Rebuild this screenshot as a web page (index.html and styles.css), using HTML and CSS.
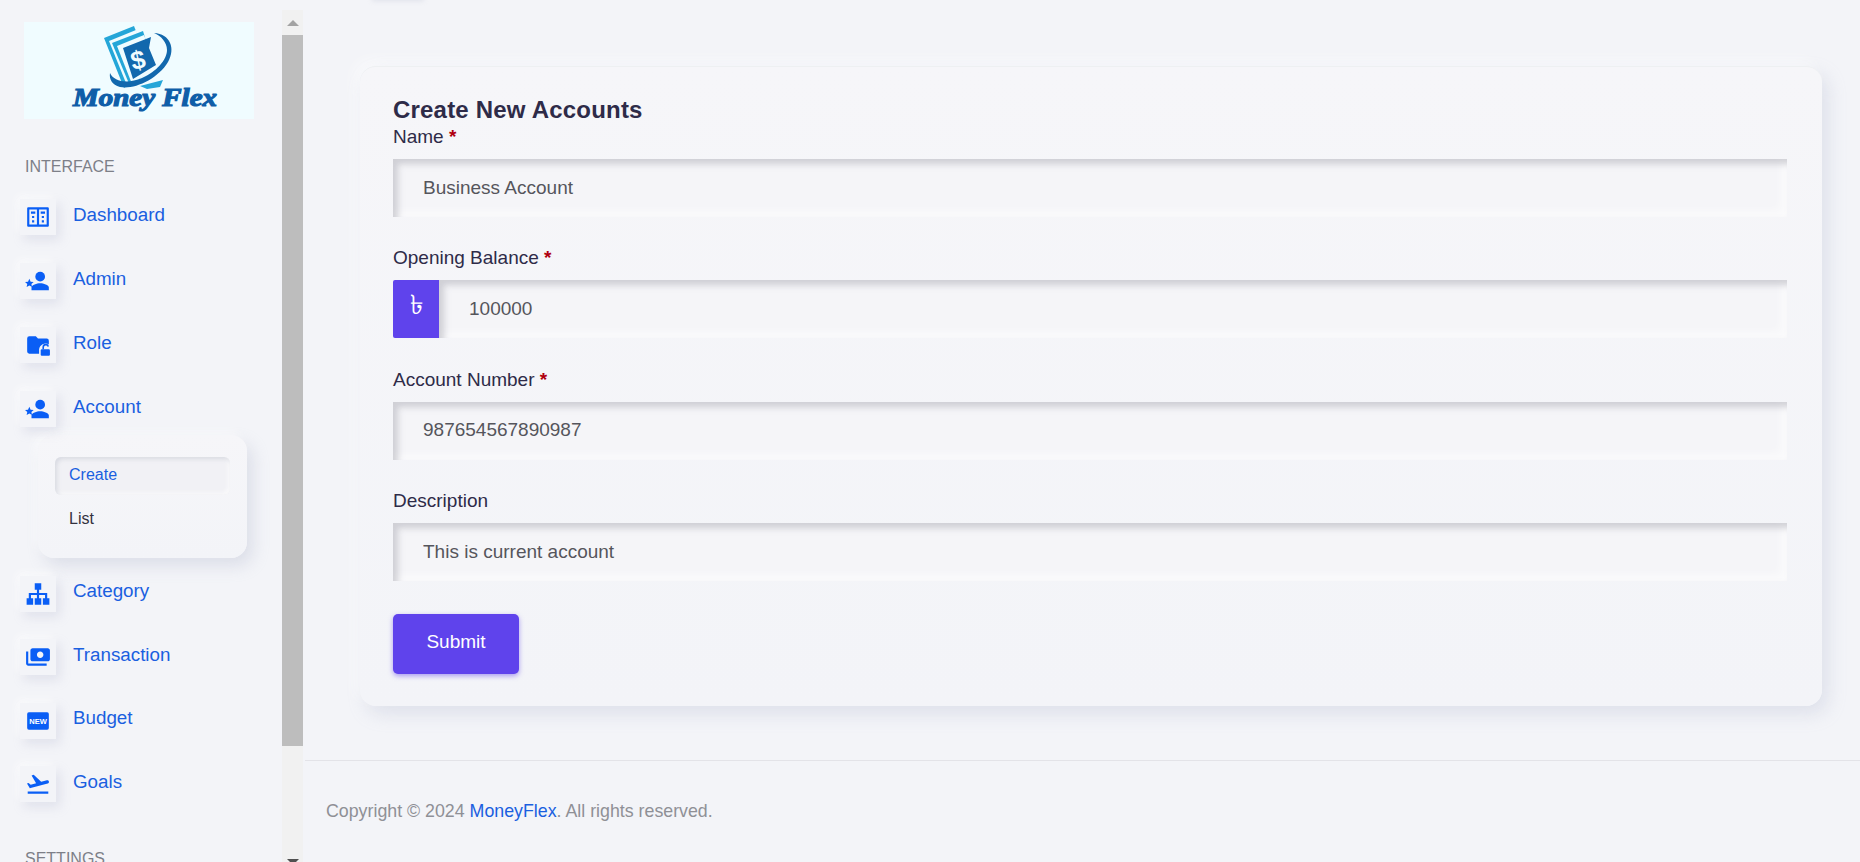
FILE: index.html
```html
<!DOCTYPE html>
<html lang="en">
<head>
    <meta charset="UTF-8">
    <meta name="viewport" content="width=device-width, initial-scale=1.0">
    <title>Create New Accounts - MoneyFlex</title>
    <link rel="stylesheet" href="styles.css">
</head>
<body>
    <aside class="sidebar">
        <div class="sidebar-scroll">
            <a class="logo" href="#">
                <svg viewBox="0 0 230 96" width="230" height="96">
                    <path d="M80 16 L110 4 L126 45 L100 66 Z" fill="#25a6d8"/>
                    <path d="M85 19 L112 8 L128 45 L104 66 Z" fill="#f0fcff"/>
                    <path d="M88 21 L119 9 L130 45 L106 64 Z" fill="#25a6d8"/>
                    <path d="M93 24 L120 13 L132 45 L108 62 Z" fill="#f0fcff"/>
                    <path d="M99 26 L127 15 L125 26 L132 43 L109 57 Z" fill="#1268ad"/>
                    <text class="logo-dollar" x="114" y="47" transform="rotate(-12 114 38)">$</text>
                    <path d="M130 11 C146 12 152 26 144 40 C134 57 110 68 96 65 C88 63 85 57 86 51 C90 60 104 62 118 56 C132 50 143 38 143 28 C143 20 137 14 130 11 Z" fill="#1268ad"/>
                    <path d="M116 64 L139 58 L136 65 L123 67 Z" fill="#25a6d8"/>
                    <text class="logo-text" x="49" y="84" textLength="144" lengthAdjust="spacingAndGlyphs">Money Flex</text>
                </svg>
            </a>

            <div class="menu-title">INTERFACE</div>
            <ul class="menu menu-top">
                <li class="menu-item">
                    <span class="menu-icon">
                        <svg viewBox="0 0 24 24"><path d="M3 3h18a1 1 0 0 1 1 1v16a1 1 0 0 1-1 1H3a1 1 0 0 1-1-1V4a1 1 0 0 1 1-1zM4 5v14h7V5zm9 0v14h7V5z" fill-rule="evenodd"/><path d="M5.500 7h4v2h-4zM14.500 7h4v2h-4zM6.500 11h2v2h-2zM15.500 11h2v2h-2zM6.500 15h2v2h-2zM15.500 15h2v2h-2z"/></svg>
                    </span>
                    <a href="#">Dashboard</a>
                </li>
                <li class="menu-item">
                    <span class="menu-icon">
                        <svg viewBox="0 0 24 24"><circle cx="14" cy="8" r="4.500"/><path d="M14 14c-3 0-8 1.500-8 4v2.500h16V18c0-2.500-5-4-8-4z"/><path d="M4 10l1.200 2.600 2.800.3-2.100 1.900.6 2.800-2.500-1.400-2.500 1.400.6-2.800L.0 12.900l2.800-.3z"/></svg>
                    </span>
                    <a href="#">Admin</a>
                </li>
                <li class="menu-item">
                    <span class="menu-icon">
                        <svg viewBox="0 0 24 24"><path d="M2 6a2 2 0 0 1 2-2h6l2 2h8a2 2 0 0 1 2 2v3.500a6 6 0 0 0-9 4.500v4H4a2 2 0 0 1-2-2z"/><rect x="14.500" y="16" width="8.500" height="6" rx="1"/><path class="lock-arc" d="M16.800 16v-2a2.400 2.400 0 0 1 4.700-.6"/></svg>
                    </span>
                    <a href="#">Role</a>
                </li>
                <li class="menu-item">
                    <span class="menu-icon">
                        <svg viewBox="0 0 24 24"><circle cx="14" cy="8" r="4.500"/><path d="M14 14c-3 0-8 1.500-8 4v2.500h16V18c0-2.500-5-4-8-4z"/><path d="M4 10l1.200 2.600 2.800.3-2.100 1.900.6 2.800-2.500-1.400-2.500 1.400.6-2.800L.0 12.900l2.800-.3z"/></svg>
                    </span>
                    <a href="#">Account</a>
                </li>
            </ul>

            <ul class="submenu">
                <li class="submenu-item active"><a href="#">Create</a></li>
                <li class="submenu-item"><a href="#">List</a></li>
            </ul>

            <ul class="menu menu-bottom">
                <li class="menu-item">
                    <span class="menu-icon">
                        <svg viewBox="0 0 24 24"><path d="M9 2h6v6H9zM1.500 16h6v6h-6zM9 16h6v6H9zM16.500 16h6v6h-6zM11 8h2v3h7.500v5h-2v-3H13v3h-2v-3H5.500v3h-2v-5H11z"/></svg>
                    </span>
                    <a href="#">Category</a>
                </li>
                <li class="menu-item">
                    <span class="menu-icon">
                        <svg viewBox="0 0 24 24"><g transform="matrix(-1 0 0 1 24 0)"><path d="M19 14V6c0-1.100-.9-2-2-2H3c-1.100 0-2 .9-2 2v8c0 1.100.9 2 2 2h14c1.100 0 2-.9 2-2zm-9-1c-1.660 0-3-1.340-3-3s1.340-3 3-3 3 1.340 3 3-1.340 3-3 3zm13-6v11c0 1.100-.9 2-2 2H4v-2h17V7h2z"/></g></svg>
                    </span>
                    <a href="#">Transaction</a>
                </li>
                <li class="menu-item">
                    <span class="menu-icon">
                        <svg viewBox="0 0 24 24"><rect x="2" y="4" width="20" height="16" rx="1.500"/><text class="icon-new" x="12" y="14.500">NEW</text></svg>
                    </span>
                    <a href="#">Budget</a>
                </li>
                <li class="menu-item">
                    <span class="menu-icon">
                        <svg viewBox="0 0 24 24"><path d="M2.500 19h19v2h-19zm19.570-9.360c-.21-.8-1.040-1.280-1.840-1.060L14.920 10l-6.900-6.430-1.930.51 4.140 7.170-4.970 1.330-1.970-1.540-1.450.39 1.820 3.160.77 1.330 1.600-.43 5.310-1.420 4.350-1.160L21 11.490c.81-.23 1.280-1.050 1.070-1.850z"/></svg>
                    </span>
                    <a href="#">Goals</a>
                </li>
            </ul>

            <div class="menu-title settings">SETTINGS</div>
        </div>

        <div class="scrollbar">
            <span class="arrow-up"></span>
            <div class="scroll-track"><div class="scroll-thumb"></div></div>
            <span class="arrow-down"></span>
        </div>
    </aside>

    <div class="main">
        <div class="top-stub"></div>
        <div class="content">
            <form class="card">
                <h1>Create New Accounts</h1>

                <div class="field">
                    <label>Name <span class="req">*</span></label>
                    <input class="input" type="text" value="Business Account">
                </div>

                <div class="field">
                    <label>Opening Balance <span class="req">*</span></label>
                    <div class="input-group">
                        <span class="input-addon">৳</span>
                        <input class="input" type="text" value="100000">
                    </div>
                </div>

                <div class="field">
                    <label>Account Number <span class="req">*</span></label>
                    <input class="input" type="text" value="987654567890987">
                </div>

                <div class="field">
                    <label>Description</label>
                    <input class="input" type="text" value="This is current account">
                </div>

                <button class="btn-submit" type="button">Submit</button>
            </form>
        </div>

        <footer class="footer">
            Copyright © 2024 <a href="#">MoneyFlex</a>. All rights reserved.
        </footer>
    </div>
</body>
</html>
```

FILE: styles.css
```css
:root {
    --bg: #f3f4f8;
    --card: #f5f5f8;
    --primary: #5f43ec;
    --link: #1a5fe0;
    --icon: #0a5ef5;
    --text: #2e2b48;
}

* {
    box-sizing: border-box;
}

html, body {
    height: 100%;
}

body {
    margin: 0;
    display: flex;
    overflow: hidden;
    background: var(--bg);
    font-family: 'Liberation Sans', Arial, sans-serif;
    color: var(--text);
}

a {
    text-decoration: none;
}

ul {
    list-style: none;
    margin: 0;
    padding: 0;
}

/* sidebar */
.sidebar {
    width: 305px;
    flex-shrink: 0;
    display: flex;
    height: 862px;
    overflow: hidden;
}

.sidebar-scroll {
    width: 282px;
    padding: 22px 0 0 20px;
    overflow: hidden;
}

.logo {
    display: block;
    width: 230px;
    height: 97px;
    margin-left: 4px;
    background: #f0fcff;
}

.logo svg {
    display: block;
}

.logo-text {
    font-family: 'Liberation Serif', serif;
    font-weight: bold;
    font-style: italic;
    font-size: 25px;
    fill: #0f5ea8;
    stroke: #0f5ea8;
    stroke-width: 1.2px;
}

.logo-dollar {
    font-family: 'Liberation Sans', sans-serif;
    font-weight: bold;
    font-size: 26px;
    fill: #f0fcff;
    text-anchor: middle;
}

.menu-title {
    margin: 38px 0 0 5px;
    height: 20px;
    line-height: 20px;
    font-size: 16px;
    color: #7d7f88;
}

.menu-title.settings {
    margin-top: 46px;
}

.menu-item {
    display: flex;
    align-items: center;
    gap: 17px;
    height: 38px;
    margin-top: 25.500px;
}

.menu-top .menu-item {
    margin-top: 26px;
}

.menu-top .menu-item:first-child {
    margin-top: 21px;
}

.menu-bottom .menu-item:first-child {
    margin-top: 17.200px;
}

.menu-icon {
    width: 36px;
    height: 36px;
    display: flex;
    align-items: center;
    justify-content: center;
    background: var(--bg);
    box-shadow: 4px 5px 10px rgba(170, 175, 200, 0.26), -3px -3px 8px rgba(255, 255, 255, 0.7);
}

.menu-icon svg {
    width: 26px;
    height: 26px;
    fill: var(--icon);
}

.lock-arc {
    fill: none;
    stroke: var(--icon);
    stroke-width: 1.500;
}

.icon-new {
    font-family: 'Liberation Sans', sans-serif;
    font-weight: bold;
    font-size: 7px;
    fill: #fff;
    text-anchor: middle;
}

.menu-item a {
    font-size: 18.800px;
    line-height: 24px;
    margin-top: -5px;
    color: var(--link);
}

.submenu {
    width: 209px;
    height: 123px;
    margin: 6.500px 0 0 18px;
    padding: 22px 17px;
    border-radius: 16px;
    background: linear-gradient(#f6f6f9, #f3f4f8);
    box-shadow: 6px 8px 16px rgba(170, 175, 200, 0.3), -4px -4px 10px rgba(255, 255, 255, 0.6);
}

.submenu-item {
    height: 38px;
    padding: 0 14px;
    line-height: 36px;
    font-size: 16px;
    border-radius: 6px;
}

.submenu-item + .submenu-item {
    margin-top: 6px;
}

.submenu-item a {
    color: #33313f;
}

.submenu-item.active {
    background: #f1f1f5;
    box-shadow: inset 2px 2px 4px rgba(170, 175, 190, 0.35), inset -2px -2px 4px rgba(255, 255, 255, 0.7);
}

.submenu-item.active a {
    color: var(--link);
}

/* fake scrollbar, it sits at a fixed scroll position */
.scrollbar {
    width: 21px;
    margin-top: 10px;
    display: flex;
    flex-direction: column;
    align-items: center;
    background: #f1f1f1;
}

.scroll-track {
    flex: 1;
    width: 100%;
}

.scroll-thumb {
    height: 711px;
    margin-top: 29px;
    background: #bdbdbd;
}

.arrow-up,
.arrow-down {
    flex-shrink: 0;
    width: 0;
    height: 0;
    border-left: 6px solid transparent;
    border-right: 6px solid transparent;
}

.arrow-up {
    margin-top: 10px;
    margin-bottom: -20px;
    border-bottom: 6px solid #a3a3a3;
}

.arrow-down {
    margin-bottom: -3px;
    border-top: 6px solid #505050;
}

/* main */
.main {
    flex: 1;
    min-width: 0;
    position: relative;
}

.top-stub {
    position: absolute;
    top: -10px;
    left: 67px;
    width: 52px;
    height: 10px;
    box-shadow: 0 1px 5px rgba(170, 175, 200, 0.25);
}

.content {
    height: 760px;
    padding: 66px 38px 0 55px;
}

.card {
    height: 640px;
    padding: 29px 35px 0 33px;
    border-top: 1px solid #eef0f2;
    border-radius: 16px;
    background: linear-gradient(#f6f6f9, #f3f4f8);
    box-shadow: 6px 8px 18px rgba(170, 175, 200, 0.28), -6px -6px 14px rgba(255, 255, 255, 0.55);
}

h1 {
    margin: 0;
    font-size: 24px;
    line-height: 28px;
    font-weight: bold;
    letter-spacing: .2px;
    color: var(--text);
}

.field {
    margin-bottom: 28.400px;
}

.field label {
    display: block;
    height: 35px;
    line-height: 26px;
    font-size: 19px;
}

.req {
    color: #b0000f;
    font-weight: bold;
}

.input {
    display: block;
    width: 100%;
    height: 58px;
    padding: 0 30px 1px;
    border: 0;
    border-radius: 0;
    outline: 0;
    font-family: inherit;
    font-size: 19px;
    color: #55555c;
    background: var(--card);
    box-shadow: inset 5px 5px 6px rgba(170, 170, 180, 0.5), inset -6px -6px 8px rgba(255, 255, 255, 0.6);
}

.input-group {
    display: flex;
}

.input-group .input {
    flex: 1;
    min-width: 0;
}

.input-addon {
    width: 46px;
    flex-shrink: 0;
    display: flex;
    align-items: center;
    justify-content: center;
    padding-bottom: 6px;
    font-family: 'Noto Sans', 'DejaVu Sans', sans-serif;
    font-size: 27px;
    color: #fff;
    background: var(--primary);
    border-radius: 2px 0 0 2px;
}

.btn-submit {
    display: block;
    width: 126px;
    height: 60px;
    margin-top: 33px;
    padding: 0 0 4px;
    border: 0;
    border-radius: 5px;
    font-family: inherit;
    font-size: 19px;
    color: #fff;
    background: var(--primary);
    box-shadow: 0 2px 5px rgba(95, 67, 236, 0.5);
}

.footer {
    border-top: 1px solid #e3e3e8;
    height: 102px;
    padding: 38px 21px 0;
    font-size: 17.800px;
    line-height: 24px;
    color: #8f9096;
}

.footer a {
    color: var(--link);
}
```
